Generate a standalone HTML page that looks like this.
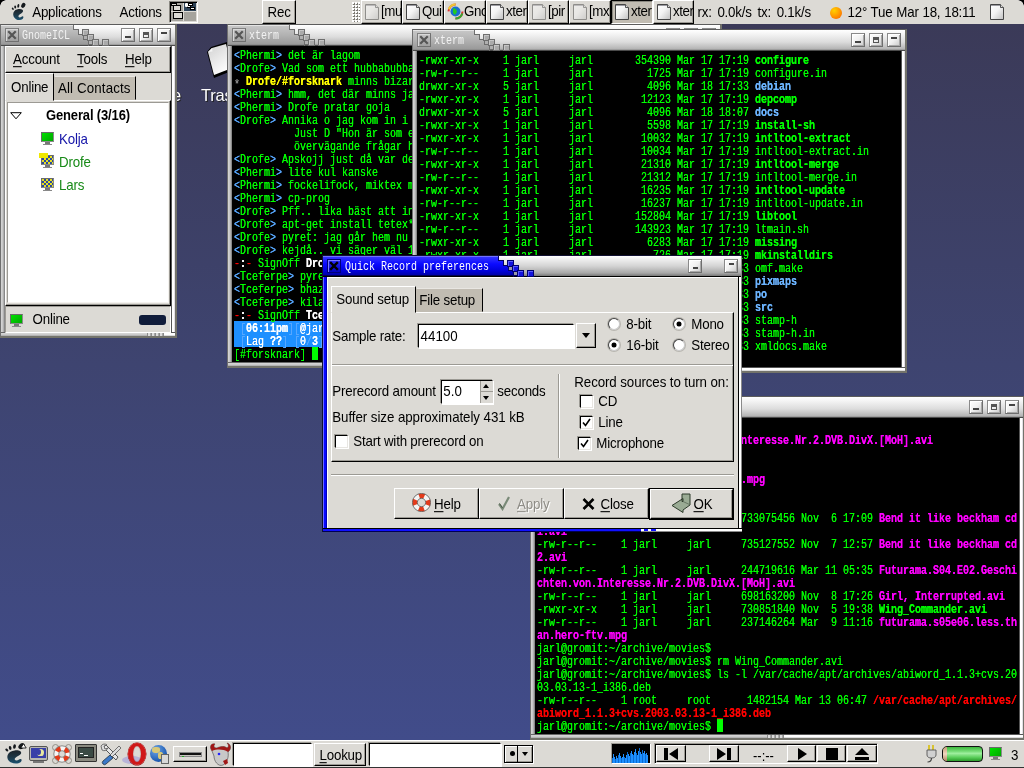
<!DOCTYPE html>
<html><head><meta charset="utf-8"><title>desktop</title>
<style>
*{box-sizing:border-box;margin:0;padding:0}
html,body{width:1024px;height:768px;overflow:hidden;background:#3c3a5c}
body{position:relative;font-family:"Liberation Sans",sans-serif;font-size:13.33px;letter-spacing:-0.2px;color:#000;line-height:1}
.abs{position:absolute}
#root{position:absolute;left:0;top:0;width:1024px;height:768px;overflow:hidden;will-change:transform}
#desk{position:absolute;left:0;top:0;width:1024px;height:768px;background:linear-gradient(#3b3a58 24px,#3e4470 365px,#414c8a 740px)}
.t{position:absolute;white-space:pre;line-height:16px;height:16px;transform:scaleY(1.08);transform-origin:0 12.4px}
/* ---------- window frames ---------- */
.win{position:absolute;background:#72726a}
.win .fr{position:absolute;left:0;top:0;right:0;bottom:0;border:1px solid #5c5c5c;border-left-color:#707070;border-right:2px solid #73736b;border-bottom:2px solid #73736b;background:linear-gradient(90deg,#e6e6e6 0,#bdbdbd 1px,#b5b5b5 3px,#fff 3px) }
.win .fr2{position:absolute;left:1px;top:1px;right:2px;bottom:2px;background:#f4f4f4;border-left:1px solid #e4e4e4}
.win .lf{position:absolute;left:1px;top:1px;width:4px;bottom:2px;background:linear-gradient(90deg,#d2d2d2 0 1px,#c8c8c8 1px 2px,#b0b0b0 2px 3px,#888 3px)}
.win .rf{position:absolute;right:2px;top:1px;width:4px;bottom:2px;background:linear-gradient(90deg,#555 0 1px,#fff 1px 3px,#e4e0e6 3px)}
.win .bf{position:absolute;left:1px;right:2px;bottom:2px;height:4px;background:linear-gradient(#555 0 1px,#fff 1px 3px,#dcdcdc 3px)}
.win .bfl{position:absolute;left:1px;bottom:2px;height:4px;background:linear-gradient(#666 0 1px,#d4d4d4 1px 2px,#cbcbcb 2px 3px,#b4b4b4 3px)}
.win .grip{position:absolute;bottom:2px;height:3px;width:17px;background:repeating-linear-gradient(90deg,#8c8c8c 0 1px,#dcdcdc 1px 3px,#a8a8a8 3px 4px)}
.win .tb{position:absolute;left:1px;top:1px;right:2px;height:21px;background:linear-gradient(#fff 0,#f4f4f4 4px,#dcdcdc 12px,#b4b4b4 19px,#8a8a8a 20px,#4a4a4a 20px)}
.win .tbl{position:absolute;left:0;top:0;height:21px;background:linear-gradient(#e4e4e4 0 1px,#c6c6c6 1px,#b2b2b2 10px,#9a9a9a 19px,#828282 20px,#4a4a4a 20px)}
.win .ttl{position:absolute;left:21px;top:5px;font-family:"Liberation Mono",monospace;font-size:12px;line-height:13px;letter-spacing:0;color:#f2f2f2;white-space:pre;transform:scale(0.83333,1);transform-origin:0 0}
.sq{position:absolute;width:7px;height:7px;background:#aaa;border:1px solid #6e6e6e;box-shadow:inset 1px 1px 0 #c6c6c6}
.hole{position:absolute;width:5px;height:5px;background:#b0b0b0;border:1px solid #6e6e6e}
.win .tbo{position:absolute;left:0;top:0;height:21px;background:#6e6e6e}
.active .tbo{background:#000060}
.cb{position:absolute;left:4px;top:3px;width:14px;height:14px;border:1px solid;border-color:#808080 #707070 #707070 #808080;background:linear-gradient(#c4c4c4,#a0a0a0);box-shadow:inset 1px 1px 0 #d8d8d8}
.wb{position:absolute;top:3px;width:14px;height:14px;border:1px solid;border-color:#8a8a8a #6e6e6e #6e6e6e #8a8a8a;background:linear-gradient(135deg,#fff 0,#f0f0f0 50%,#c8c8c8 100%);box-shadow:inset 1px 1px 0 #fff,inset -1px -1px 0 #a8a8a8}
.wb i{position:absolute;background:#444;display:block}
.active .fr{}
.active .tbl{background:linear-gradient(#7070ff 0 1px,#3434ff 1px,#0a0aff 8px,#0000d8 15px,#0000a8 19px,#000 20px)}
.active .sq{background:#1414e0;border-color:#000070;box-shadow:inset 1px 1px 0 #5a5aff}
.active .hole{background:#9a9aa8;border-color:#000070;box-shadow:none}
.active .cb{border-color:#00007a;background:linear-gradient(#2a2aff,#0000c0);box-shadow:inset 1px 1px 0 #7a7aff}
.active .ttl{color:#fff}
.active .lf{background:linear-gradient(90deg,#8080ff 0 1px,#1010ff 1px 3px,#000068 3px)}
.term{position:absolute;background:#000;overflow:hidden}
.term pre{position:absolute;font-family:"Liberation Mono",monospace;font-size:12px;line-height:13px;letter-spacing:0;color:#00ff00;white-space:pre;transform:scale(0.83333,1);transform-origin:0 0;text-shadow:0 0 0}
.term b{font-weight:bold}
.g{color:#00ff00}.lb{color:#58a8ff}.y{color:#ffff00}.w{color:#fff}.r{color:#ff0000}.m{color:#ff00ff}.db{color:#6cb4ff}.gy{color:#8c8c8c}
/* ---------- gtk widgets ---------- */
.btn{position:absolute;background:#dcdad5;border:1px solid;border-color:#fff #000 #000 #fff;box-shadow:inset -1px -1px 0 #9c9a94}
.entry{position:absolute;background:#fff;border:1px solid;border-color:#000 #fff #fff #000;box-shadow:-1px -1px 0 #9c9a94, 1px 1px 0 #fff}
.chk{position:absolute;width:13px;height:13px;background:#fff;border:1px solid;border-color:#000 #e8e6e2 #e8e6e2 #000;box-shadow:-1px -1px 0 #9c9a94,1px 1px 0 #fff}
.rad{position:absolute;width:12px;height:12px;border-radius:50%;background:#fff;border:1px solid;border-color:#444 #ccc #ccc #444;box-shadow:0 0 0 1px #b8b6b0}
.rad.on::after{content:"";position:absolute;left:3px;top:3px;width:4px;height:4px;border-radius:50%;background:#000;box-shadow:0 0 0 0.5px #000}
u{text-decoration:underline;text-underline-offset:2px;text-decoration-thickness:1px}

.sl{color:#fff}
.cur{background:#00ff00}
.panel{position:absolute;left:0;width:1024px;background:#dcdad5}
.tk{position:absolute;top:0;height:24px;width:42px;border:1px solid;border-color:#fff #000 #000 #fff;box-shadow:inset -1px -1px 0 #9c9a94;background:#dcdad5;overflow:hidden}
.tk.on{background:#c1bcb2;border-color:#000 #fff #fff #000;box-shadow:inset 1px 1px 0 #8a8880}
.tk span{position:absolute;left:19px;top:3px;letter-spacing:-0.45px;white-space:pre;line-height:16px;transform:scaleY(1.08);transform-origin:0 12.4px}
.pg{position:absolute;left:3px;top:3px;width:14px;height:16px}
</style></head>
<body><div id="root"><div id="desk"></div><div class="t" style="left:172px;top:85px;font-size:16.5px;line-height:20px;height:20px;color:#fff;text-shadow:1px 1px 0 #222;transform:none">e</div><div class="t" style="left:201px;top:85px;font-size:16.5px;line-height:20px;height:20px;color:#fff;text-shadow:1px 1px 0 #222;transform:none">Trash</div><svg class="abs" style="left:204px;top:42px" width="30" height="40" viewBox="0 0 30 40"><defs><linearGradient id="trg" x1="0" y1="0" x2="0.6" y2="1"><stop offset="0" stop-color="#d0d0d0"/><stop offset="1" stop-color="#fff"/></linearGradient></defs><path d="M3 10 L7 5 L23 0 L30 28 L10 36 Z" fill="#000"/><path d="M4 10 L8 6 L22 2 L28 26 L10 33 Z" fill="url(#trg)"/><path d="M4 10L8 6L8.500 9.500Z" fill="#f4f4f4"/></svg><div class="win" style="left:0px;top:24px;width:177px;height:314px"><div class="fr"></div><div class="fr2"></div><div class="tb"><div class="tbo" style="width:89px;clip-path:polygon(0 0,73px 0,73px 4px,78px 4px,78px 9px,83px 9px,83px 14px,88px 14px,88px 21px,0 21px)"></div><div class="tbl" style="width:88px;clip-path:polygon(0 0,72px 0,72px 5px,77px 5px,77px 10px,82px 10px,82px 15px,87px 15px,87px 21px,0 21px)"></div><div class="sq" style="left:81px;top:4px"></div><div class="hole" style="left:82px;top:10px"></div><div class="sq" style="left:86px;top:9px"></div><div class="hole" style="left:87px;top:15px"></div><div class="sq" style="left:91px;top:14px"></div><div class="sq" style="left:101px;top:14px"></div><div class="cb"><svg width="12" height="12" viewBox="0 0 12 12" style="position:absolute;left:0;top:0"><path d="M3 3L9 9M9 3L3 9" stroke="#555" stroke-width="2.2" stroke-linecap="square"/></svg></div><div class="ttl" style="left:21px">GnomeICL</div><div class="wb" style="left:156px"><i style="left:3px;top:3px;width:6px;height:2px"></i></div><div class="wb" style="left:138px"><i style="left:3px;top:3px;width:6px;height:6px;background:none;border:1px solid #555;border-top:3px solid #555"></i></div><div class="wb" style="left:120px"><i style="left:3px;top:7px;width:6px;height:2px"></i></div></div><div class="lf" style="top:22px"></div><div class="rf" style="top:22px"></div><div class="bf"></div><div class="bfl" style="width:147px"></div><div class="grip" style="left:147px"></div><div class="abs" style="left:5px;top:22px;width:166px;height:286px;background:#dcdad5"></div><div class="abs" style="left:5px;top:22px;width:166px;height:27px;border:1px solid;border-color:#fff #000 #000 #fff;box-shadow:inset -1px -1px 0 #9c9a94"></div><div class="t" style="left:13px;top:28px;"><u>A</u>ccount</div><div class="t" style="left:77px;top:28px;"><u>T</u>ools</div><div class="t" style="left:125px;top:28px;"><u>H</u>elp</div><div class="abs" style="left:5px;top:76px;width:166px;height:206px;border:1px solid;border-color:#fff #000 #000 #fff;box-shadow:inset -1px -1px 0 #9c9a94"></div><div class="abs" style="left:54px;top:52px;width:82px;height:24px;background:#c1bcb2;border:1px solid;border-color:#e8e6e2 #000 #c1bcb2 #c1bcb2"></div><div class="abs" style="left:5px;top:49px;width:49px;height:28px;background:#dcdad5;border:1px solid;border-color:#fff #000 #dcdad5 #fff"></div><div class="t" style="left:11px;top:56px;">Online</div><div class="t" style="left:58px;top:57px;letter-spacing:0.12px">All Contacts</div><div class="abs" style="left:7px;top:78px;width:162px;height:201px;background:#fff;border:1px solid;border-color:#9c9a94 #f4f2ee #f4f2ee #9c9a94"></div><svg class="abs" style="left:10px;top:88px" width="12" height="8" viewBox="0 0 12 8"><path d="M.7.7h10.600L6 6.800z" fill="#fff" stroke="#000" stroke-width="1"/></svg><div class="t" style="left:46px;top:84px;font-weight:bold;font-size:13px;letter-spacing:-0.15px">General (3/16)</div><div class="abs" style="left:41px;top:108px;width:13px;height:10px;background:linear-gradient(135deg,#00e000,#00a800);border:1px solid #6a6a6a;border-right-color:#8a8a8a;border-bottom-color:#8a8a8a"></div><div class="abs" style="left:45px;top:118px;width:5px;height:2px;background:#777"></div><div class="abs" style="left:43px;top:120px;width:9px;height:1px;background:#888"></div><div class="t" style="left:59px;top:108px;color:#1414a8">Kolja</div><div class="abs" style="left:41px;top:131px;width:13px;height:10px;background:repeating-conic-gradient(#2a4aa0 0 25%,#e8e020 0 50%) 0 0/4px 4px;border:1px solid #6a6a6a;border-right-color:#8a8a8a;border-bottom-color:#8a8a8a"></div><div class="abs" style="left:45px;top:141px;width:5px;height:2px;background:#777"></div><div class="abs" style="left:43px;top:143px;width:9px;height:1px;background:#888"></div><div class="abs" style="left:39px;top:129px;width:9px;height:5px;background:#f0e800"></div><div class="t" style="left:59px;top:131px;color:#178a17">Drofe</div><div class="abs" style="left:41px;top:154px;width:13px;height:10px;background:repeating-conic-gradient(#2a4aa0 0 25%,#e8e020 0 50%) 0 0/4px 4px;border:1px solid #6a6a6a;border-right-color:#8a8a8a;border-bottom-color:#8a8a8a"></div><div class="abs" style="left:45px;top:164px;width:5px;height:2px;background:#777"></div><div class="abs" style="left:43px;top:166px;width:9px;height:1px;background:#888"></div><div class="t" style="left:59px;top:154px;color:#178a17">Lars</div><div class="abs" style="left:5px;top:282px;width:166px;height:27px;border:1px solid;border-color:#9c9a94 #fff #fff #9c9a94"></div><div class="abs" style="left:10px;top:290px;width:13px;height:10px;background:linear-gradient(135deg,#00e000,#00a800);border:1px solid #6a6a6a;border-right-color:#8a8a8a;border-bottom-color:#8a8a8a"></div><div class="abs" style="left:14px;top:300px;width:5px;height:2px;background:#777"></div><div class="abs" style="left:12px;top:302px;width:9px;height:1px;background:#888"></div><div class="t" style="left:32.5px;top:288px;">Online</div><div class="abs" style="left:139px;top:291px;width:27px;height:10px;border-radius:3px;background:#101c3a"></div></div><div class="win" style="left:227px;top:24px;width:495px;height:344px"><div class="fr"></div><div class="fr2"></div><div class="tb"><div class="tbo" style="width:78px;clip-path:polygon(0 0,62px 0,62px 4px,67px 4px,67px 9px,72px 9px,72px 14px,77px 14px,77px 21px,0 21px)"></div><div class="tbl" style="width:77px;clip-path:polygon(0 0,61px 0,61px 5px,66px 5px,66px 10px,71px 10px,71px 15px,76px 15px,76px 21px,0 21px)"></div><div class="sq" style="left:70px;top:4px"></div><div class="hole" style="left:71px;top:10px"></div><div class="sq" style="left:75px;top:9px"></div><div class="hole" style="left:76px;top:15px"></div><div class="sq" style="left:80px;top:14px"></div><div class="sq" style="left:90px;top:14px"></div><div class="cb"><svg width="12" height="12" viewBox="0 0 12 12" style="position:absolute;left:0;top:0"><path d="M3 3L9 9M9 3L3 9" stroke="#555" stroke-width="2.2" stroke-linecap="square"/></svg></div><div class="ttl" style="left:21px">xterm</div><div class="wb" style="left:474px"><i style="left:3px;top:3px;width:6px;height:2px"></i></div><div class="wb" style="left:456px"><i style="left:3px;top:3px;width:6px;height:6px;background:none;border:1px solid #555;border-top:3px solid #555"></i></div><div class="wb" style="left:438px"><i style="left:3px;top:7px;width:6px;height:2px"></i></div></div><div class="lf" style="top:22px"></div><div class="rf" style="top:22px"></div><div class="bf"></div><div class="bfl" style="width:237px"></div><div class="grip" style="left:237px"></div><div class="term" style="left:5px;top:22px;width:484px;height:316px"><div class="abs" style="left:2px;top:275px;width:480px;height:26px;background:#1e90ff"></div><div class="abs" style="left:80px;top:301px;width:6px;height:13px;background:#0f0"></div><pre style="left:2px;top:4px"><span class="lb">&lt;</span>Phermi<span class="lb">&gt;</span> det är lagom
<span class="lb">&lt;</span>Drofe<span class="lb">&gt;</span> Vad som ett hubbabubba ska smaka som en vattenmelon
<span class="gy" style="position:relative;top:3px">*</span> <span class="y"><b>Drofe/#forsknark</b></span> minns bizarra saker från igår
<span class="lb">&lt;</span>Phermi<span class="lb">&gt;</span> hmm, det där minns jag inte
<span class="lb">&lt;</span>Phermi<span class="lb">&gt;</span> Drofe pratar goja
<span class="lb">&lt;</span>Drofe<span class="lb">&gt;</span> Annika o jag kom in i en diskussion om
          Just D "Hon är som en
          övervägande frågar hon
<span class="lb">&lt;</span>Drofe<span class="lb">&gt;</span> Apskojj just då var det
<span class="lb">&lt;</span>Phermi<span class="lb">&gt;</span> lite kul kanske
<span class="lb">&lt;</span>Phermi<span class="lb">&gt;</span> fockelifock, miktex måste
<span class="lb">&lt;</span>Phermi<span class="lb">&gt;</span> cp-prog
<span class="lb">&lt;</span>Drofe<span class="lb">&gt;</span> Pff.. lika bäst att installera
<span class="lb">&lt;</span>Drofe<span class="lb">&gt;</span> apt-get install tetex*
<span class="lb">&lt;</span>Drofe<span class="lb">&gt;</span> pyret: jag går hem nu
<span class="lb">&lt;</span>Drofe<span class="lb">&gt;</span> kejdå.. vi säger väl 10
<span class="r">-</span><span class="w"><b>:</b></span><span class="r">-</span> SignOff <span class="w"><b>Drofe</b></span>: #forsknark
<span class="lb">&lt;</span>Tceferpe<span class="lb">&gt;</span> pyret
<span class="lb">&lt;</span>Tceferpe<span class="lb">&gt;</span> bhaz
<span class="lb">&lt;</span>Tceferpe<span class="lb">&gt;</span> kilar
<span class="r">-</span><span class="w"><b>:</b></span><span class="r">-</span> SignOff <span class="w"><b>Tceferpe</b></span>: #forsknark
<span class="sl"> <span class="lb">[</span><span class="w"><b>06:11pm</b></span><span class="lb">]</span><span class="lb">[</span><span class="w"><b>@</b></span><span class="w">jarl</span><span class="lb">(</span>+i<span class="lb">)]</span>                                                            </span>
<span class="sl"> <span class="lb">[</span><span class="w">Lag </span><span class="w"><b>??</b></span><span class="lb">]</span> <span class="lb">[</span><span class="w">0</span><span class="lb">/</span><span class="w"><b>3</b></span><span class="lb">]</span>                                                              </span>
[#forsknark]</pre></div></div><div class="win" style="left:412px;top:29px;width:495px;height:344px"><div class="fr"></div><div class="fr2"></div><div class="tb"><div class="tbo" style="width:78px;clip-path:polygon(0 0,62px 0,62px 4px,67px 4px,67px 9px,72px 9px,72px 14px,77px 14px,77px 21px,0 21px)"></div><div class="tbl" style="width:77px;clip-path:polygon(0 0,61px 0,61px 5px,66px 5px,66px 10px,71px 10px,71px 15px,76px 15px,76px 21px,0 21px)"></div><div class="sq" style="left:70px;top:4px"></div><div class="hole" style="left:71px;top:10px"></div><div class="sq" style="left:75px;top:9px"></div><div class="hole" style="left:76px;top:15px"></div><div class="sq" style="left:80px;top:14px"></div><div class="sq" style="left:90px;top:14px"></div><div class="cb"><svg width="12" height="12" viewBox="0 0 12 12" style="position:absolute;left:0;top:0"><path d="M3 3L9 9M9 3L3 9" stroke="#555" stroke-width="2.2" stroke-linecap="square"/></svg></div><div class="ttl" style="left:21px">xterm</div><div class="wb" style="left:474px"><i style="left:3px;top:3px;width:6px;height:2px"></i></div><div class="wb" style="left:456px"><i style="left:3px;top:3px;width:6px;height:6px;background:none;border:1px solid #555;border-top:3px solid #555"></i></div><div class="wb" style="left:438px"><i style="left:3px;top:7px;width:6px;height:2px"></i></div></div><div class="lf" style="top:22px"></div><div class="rf" style="top:22px"></div><div class="bf"></div><div class="bfl" style="width:237px"></div><div class="grip" style="left:237px"></div><div class="term" style="left:5px;top:22px;width:484px;height:316px"><pre style="left:2px;top:4px">-rwxr-xr-x    1 jarl     jarl       354390 Mar 17 17:19 <b>configure</b>
-rw-r--r--    1 jarl     jarl         1725 Mar 17 17:19 configure.in
drwxr-xr-x    5 jarl     jarl         4096 Mar 18 17:33 <span class="db"><b>debian</b></span>
-rwxr-xr-x    1 jarl     jarl        12123 Mar 17 17:19 <b>depcomp</b>
drwxr-xr-x    5 jarl     jarl         4096 Mar 18 18:07 <span class="db"><b>docs</b></span>
-rwxr-xr-x    1 jarl     jarl         5598 Mar 17 17:19 <b>install-sh</b>
-rwxr-xr-x    1 jarl     jarl        10032 Mar 17 17:19 <b>intltool-extract</b>
-rw-r--r--    1 jarl     jarl        10034 Mar 17 17:19 intltool-extract.in
-rwxr-xr-x    1 jarl     jarl        21310 Mar 17 17:19 <b>intltool-merge</b>
-rw-r--r--    1 jarl     jarl        21312 Mar 17 17:19 intltool-merge.in
-rwxr-xr-x    1 jarl     jarl        16235 Mar 17 17:19 <b>intltool-update</b>
-rw-r--r--    1 jarl     jarl        16237 Mar 17 17:19 intltool-update.in
-rwxr-xr-x    1 jarl     jarl       152804 Mar 17 17:19 <b>libtool</b>
-rw-r--r--    1 jarl     jarl       143923 Mar 17 17:19 ltmain.sh
-rwxr-xr-x    1 jarl     jarl         6283 Mar 17 17:19 <b>missing</b>
-rwxr-xr-x    1 jarl     jarl          726 Mar 17 17:19 <b>mkinstalldirs</b>
-rw-r--r--    1 jarl     jarl         1113 Mar 18 17:33 omf.make
drwxr-xr-x    3 jarl     jarl         4096 Mar 18 17:33 <span class="db"><b>pixmaps</b></span>
drwxr-xr-x    3 jarl     jarl         4096 Mar 18 17:33 <span class="db"><b>po</b></span>
drwxr-xr-x    3 jarl     jarl         4096 Mar 18 17:33 <span class="db"><b>src</b></span>
-rw-r--r--    1 jarl     jarl           10 Mar 18 17:33 stamp-h
-rw-r--r--    1 jarl     jarl           10 Mar 18 17:33 stamp-h.in
-rw-r--r--    1 jarl     jarl         2443 Mar 18 17:33 xmldocs.make
jarl@gromit:~/src/quickrecord$ </pre></div></div><div class="win" style="left:530px;top:396px;width:495px;height:344px"><div class="fr"></div><div class="fr2"></div><div class="tb"><div class="tbo" style="width:78px;clip-path:polygon(0 0,62px 0,62px 4px,67px 4px,67px 9px,72px 9px,72px 14px,77px 14px,77px 21px,0 21px)"></div><div class="tbl" style="width:77px;clip-path:polygon(0 0,61px 0,61px 5px,66px 5px,66px 10px,71px 10px,71px 15px,76px 15px,76px 21px,0 21px)"></div><div class="sq" style="left:70px;top:4px"></div><div class="hole" style="left:71px;top:10px"></div><div class="sq" style="left:75px;top:9px"></div><div class="hole" style="left:76px;top:15px"></div><div class="sq" style="left:80px;top:14px"></div><div class="sq" style="left:90px;top:14px"></div><div class="cb"><svg width="12" height="12" viewBox="0 0 12 12" style="position:absolute;left:0;top:0"><path d="M3 3L9 9M9 3L3 9" stroke="#555" stroke-width="2.2" stroke-linecap="square"/></svg></div><div class="ttl" style="left:21px">xterm</div><div class="wb" style="left:474px"><i style="left:3px;top:3px;width:6px;height:2px"></i></div><div class="wb" style="left:456px"><i style="left:3px;top:3px;width:6px;height:6px;background:none;border:1px solid #555;border-top:3px solid #555"></i></div><div class="wb" style="left:438px"><i style="left:3px;top:7px;width:6px;height:2px"></i></div></div><div class="lf" style="top:22px"></div><div class="rf" style="top:22px"></div><div class="bf"></div><div class="bfl" style="width:237px"></div><div class="grip" style="left:237px"></div><div class="term" style="left:5px;top:22px;width:484px;height:316px"><div class="abs" style="left:182px;top:301px;width:6px;height:13px;background:#0f0"></div><pre style="left:2px;top:4px">jarl@gromit:~/archive/movies$
<span class="m"><b>Futurama.S04.E02.Geschichten.von.Interesse.Nr.2.DVB.DivX.[MoH].avi</b></span>
jarl@gromit:~/archive/movies$
jarl@gromit:~/archive/movies$
<span class="m"><b>futurama.s05e06.less.than.hero-ftv.mpg</b></span>
jarl@gromit:~/archive/movies$ ls
total 4248132
-rw-r--r--    1 jarl     jarl     733075456 Nov  6 17:09 <span class="m"><b>Bend it like beckham cd</b></span>
<span class="m"><b>1.avi</b></span>
-rw-r--r--    1 jarl     jarl     735127552 Nov  7 12:57 <span class="m"><b>Bend it like beckham cd</b></span>
<span class="m"><b>2.avi</b></span>
-rw-r--r--    1 jarl     jarl     244719616 Mar 11 05:35 <span class="m"><b>Futurama.S04.E02.Geschi</b></span>
<span class="m"><b>chten.von.Interesse.Nr.2.DVB.DivX.[MoH].avi</b></span>
-rw-r--r--    1 jarl     jarl     698163200 Nov  8 17:26 <span class="m"><b>Girl, Interrupted.avi</b></span>
-rwxr-xr-x    1 jarl     jarl     730851840 Nov  5 19:38 <span class="g"><b>Wing_Commander.avi</b></span>
-rw-r--r--    1 jarl     jarl     237146264 Mar  9 11:16 <span class="m"><b>futurama.s05e06.less.th</b></span>
<span class="m"><b>an.hero-ftv.mpg</b></span>
jarl@gromit:~/archive/movies$
jarl@gromit:~/archive/movies$ rm Wing_Commander.avi
jarl@gromit:~/archive/movies$ ls -l /var/cache/apt/archives/abiword_1.1.3+cvs.20
03.03.13-1_i386.deb
-rw-r--r--    1 root     root      1482154 Mar 13 06:47 <span class="r"><b>/var/cache/apt/archives/</b></span>
<span class="r"><b>abiword_1.1.3+cvs.2003.03.13-1_i386.deb</b></span>
jarl@gromit:~/archive/movies$</pre></div></div><div class="win active" style="left:322px;top:255px;width:420px;height:277px;background:none"><div class="abs" style="left:0;top:0;width:420px;height:277px;background:#8a8a8a;border-left:1px solid #101030;border-top:1px solid #101030"></div><div class="abs" style="left:1px;top:1px;width:4px;height:275px;background:linear-gradient(90deg,#6a6aff 0 1px,#0808ff 1px 3px,#0000b8 3px)"></div><div class="abs" style="left:416px;top:22px;width:4px;height:255px;background:linear-gradient(90deg,#000 0 1px,#fff 1px 3px,#8a8a8a 3px)"></div><div class="abs" style="left:1px;top:273px;width:419px;height:4px;background:linear-gradient(#000 0 1px,#fff 1px 3px,#8a8a8a 3px)"></div><div class="abs" style="left:1px;top:273px;width:318px;height:4px;background:linear-gradient(#000 0 1px,#1010ff 1px 3px,#000050 3px)"></div><div class="abs" style="left:322px;top:274px;width:4px;height:2px;background:#1010ff"></div><div class="abs" style="left:329px;top:274px;width:5px;height:2px;background:#1010ff"></div><div class="tb" style="left:1px;top:1px;right:1px;height:21px;background:linear-gradient(#fff 0,#f0f0f0 3px,#d4d4d4 10px,#a8a8a8 17px,#787878 20px,#000 20px)"><div class="tbo" style="width:192px;clip-path:polygon(0 0,176px 0,176px 4px,181px 4px,181px 9px,186px 9px,186px 14px,191px 14px,191px 21px,0 21px)"></div><div class="tbl" style="width:191px;clip-path:polygon(0 0,175px 0,175px 5px,180px 5px,180px 10px,185px 10px,185px 15px,190px 15px,190px 21px,0 21px)"></div><div class="sq" style="left:184px;top:4px"></div><div class="hole" style="left:185px;top:10px"></div><div class="sq" style="left:189px;top:9px"></div><div class="hole" style="left:190px;top:15px"></div><div class="sq" style="left:194px;top:14px"></div><div class="sq" style="left:204px;top:14px"></div><div class="cb"><svg width="12" height="12" viewBox="0 0 12 12" style="position:absolute;left:0;top:0"><path d="M3 3L9 9M9 3L3 9" stroke="#000" stroke-width="2.4" stroke-linecap="square"/></svg></div><div class="ttl" style="left:22px">Quick Record preferences</div><div class="wb" style="left:365px"><i style="left:4px;top:7px;width:5px;height:2px"></i></div><div class="wb" style="left:401px"><i style="left:4px;top:3px;width:5px;height:2px"></i></div></div><div class="abs" style="left:5px;top:22px;width:411px;height:251px;background:#dcdad5;border-left:1px solid #fff;border-top:1px solid #fff"></div><div class="abs" style="left:9px;top:57px;width:403px;height:150px;border:1px solid;border-color:#fff #000 #000 #fff;box-shadow:inset -1px -1px 0 #9c9a94"></div><div class="abs" style="left:94px;top:33px;width:67px;height:24px;background:#c1bcb2;border:1px solid;border-color:#e8e6e2 #000 #c1bcb2 #c1bcb2"></div><div class="abs" style="left:9px;top:31px;width:85px;height:27px;background:#dcdad5;border:1px solid;border-color:#fff #000 #dcdad5 #fff"></div><div class="t" style="left:14.300000000000011px;top:37px;">Sound setup</div><div class="t" style="left:97.30000000000001px;top:38px;">File setup</div><div class="t" style="left:10.300000000000011px;top:74px;">Sample rate:</div><div class="entry" style="left:96px;top:69px;width:156px;height:24px"></div><div class="t" style="left:98.60000000000002px;top:74px;letter-spacing:0">44100</div><div class="btn" style="left:254px;top:68px;width:20px;height:25px"><div class="abs" style="left:5px;top:9px;width:0;height:0;border:4.5px solid transparent;border-top:5px solid #000;border-bottom:0"></div></div><div class="rad" style="left:286px;top:63px"></div><div class="t" style="left:304.29999999999995px;top:62px;">8-bit</div><div class="rad on" style="left:286px;top:84px"></div><div class="t" style="left:304.29999999999995px;top:83px;">16-bit</div><div class="rad on" style="left:351px;top:63px"></div><div class="t" style="left:369.29999999999995px;top:62px;">Mono</div><div class="rad" style="left:351px;top:84px"></div><div class="t" style="left:369.29999999999995px;top:83px;">Stereo</div><div class="abs" style="left:10px;top:109px;width:401px;height:2px;background:linear-gradient(#9c9a94 0 1px,#fff 1px)"></div><div class="abs" style="left:9px;top:219px;width:403px;height:2px;background:linear-gradient(#9c9a94 0 1px,#fff 1px)"></div><div class="abs" style="left:236px;top:119px;width:2px;height:84px;background:linear-gradient(90deg,#9c9a94 0 1px,#fff 1px)"></div><div class="t" style="left:10.300000000000011px;top:129px;">Prerecord amount</div><div class="entry" style="left:119px;top:125px;width:52px;height:24px"></div><div class="t" style="left:121.30000000000001px;top:129px;letter-spacing:0">5.0</div><div class="abs" style="left:158px;top:126px;width:13px;height:22px;background:#dcdad5;border-left:1px solid #9c9a94"></div><div class="abs" style="left:158px;top:136px;width:13px;height:1px;background:#9c9a94"></div><div class="abs" style="left:161px;top:129px;width:0;height:0;border:3.5px solid transparent;border-bottom:4px solid #000;border-top:0"></div><div class="abs" style="left:161px;top:141px;width:0;height:0;border:3.5px solid transparent;border-top:4px solid #000;border-bottom:0"></div><div class="t" style="left:175.3px;top:129px;">seconds</div><div class="t" style="left:10.300000000000011px;top:155px;letter-spacing:-0.07px">Buffer size approximately 431 kB</div><div class="chk" style="left:13px;top:180px"></div><div class="t" style="left:31.30000000000001px;top:179px;">Start with prerecord on</div><div class="t" style="left:252.29999999999995px;top:120px;letter-spacing:-0.1px">Record sources to turn on:</div><div class="chk" style="left:258px;top:140px"></div><div class="t" style="left:276.29999999999995px;top:139px;">CD</div><div class="chk" style="left:258px;top:161px"><svg width="11" height="11" viewBox="0 0 11 11" style="position:absolute;left:0;top:0"><path d="M2 5.500L4.500 8.500L9 2" fill="none" stroke="#000" stroke-width="1.600"/></svg></div><div class="t" style="left:276.29999999999995px;top:160px;">Line</div><div class="chk" style="left:256px;top:182px"><svg width="11" height="11" viewBox="0 0 11 11" style="position:absolute;left:0;top:0"><path d="M2 5.500L4.500 8.500L9 2" fill="none" stroke="#000" stroke-width="1.600"/></svg></div><div class="t" style="left:274.29999999999995px;top:181px;">Microphone</div><div class="btn" style="left:72px;top:233px;width:85px;height:31px"></div><div class="btn" style="left:157px;top:233px;width:85px;height:31px"></div><div class="btn" style="left:242px;top:233px;width:85px;height:31px"></div><div class="abs" style="left:327px;top:233px;width:85px;height:32px;border:1px solid #000"><div class="btn" style="left:0;top:0;width:83px;height:30px"></div></div><svg class="abs" style="left:90px;top:238px" width="19" height="19" viewBox="0 0 20 20"><circle cx="10" cy="10" r="7" fill="none" stroke="#f4f4f4" stroke-width="5"/><circle cx="10" cy="10" r="7" fill="none" stroke="#e43a1a" stroke-width="5" stroke-dasharray="5.5 5.5" stroke-dashoffset="2.7"/><circle cx="10" cy="10" r="9.6" fill="none" stroke="#555" stroke-width="0.8"/><circle cx="10" cy="10" r="4.400" fill="none" stroke="#555" stroke-width="0.8"/></svg><div class="t" style="left:112px;top:242px;"><u>H</u>elp</div><svg class="abs" style="left:175px;top:240px" width="15" height="16" viewBox="0 0 15 16"><path d="M2 9l3.500 5L12 2" fill="none" stroke="#7a8a78" stroke-width="2.200"/><path d="M2.500 8.500l3 4.500" stroke="#4a5a48" stroke-width="1"/></svg><div class="t" style="left:195px;top:242px;color:#8e8c86;text-shadow:1px 1px 0 #fff"><u>A</u>pply</div><svg class="abs" style="left:260px;top:243px" width="13" height="12" viewBox="0 0 13 12"><path d="M1.500 1L11.500 11M11.500 1L1.500 11" stroke="#000" stroke-width="2.600"/></svg><div class="t" style="left:278.5px;top:242px;"><u>C</u>lose</div><svg class="abs" style="left:349px;top:238px" width="20" height="20" viewBox="0 0 20 20"><path d="M11 1H19V12L12 17V19.500L1 12.500L12 5.500V8.500H11Z" fill="#9aab94" stroke="#2c3a2a" stroke-width="1" stroke-linejoin="round"/><path d="M12 8.500L18.500 11.500" stroke="#5a6a58" stroke-width="0.8"/></svg><div class="t" style="left:371.5px;top:242px;"><u>O</u>K</div></div><div class="panel" style="top:0;height:24px;border-radius:6px 6px 0 0;background:#dcdad5"></div><div class="abs" style="left:0;top:0;width:6px;height:6px;background:radial-gradient(circle at 6px 6px,transparent 5.5px,#000 6px)"></div><div class="abs" style="left:1018px;top:0;width:6px;height:6px;background:radial-gradient(circle at 0 6px,transparent 5.5px,#000 6px)"></div><svg class="abs" style="left:0;top:0" width="32" height="24" viewBox="0 0 32 24"><defs><linearGradient id="ftga" x1="0" y1="0" x2="0" y2="1"><stop offset="0" stop-color="#1c2228"/><stop offset="0.5" stop-color="#1e3644"/><stop offset="1" stop-color="#1a5272"/></linearGradient></defs><g fill="url(#ftga)"><ellipse cx="23.3" cy="5.4" rx="1.9" ry="2.7" transform="rotate(35 23.3 5.4)" fill="#14181c"/><ellipse cx="18.3" cy="5.8" rx="1.0" ry="1.9" transform="rotate(8 18.3 5.8)" fill="#14181c"/><ellipse cx="15.2" cy="7" rx="0.95" ry="1.6" transform="rotate(-8 15.2 7)" fill="#14181c"/><ellipse cx="12.8" cy="8.7" rx="0.85" ry="1.3" transform="rotate(-35 12.8 8.7)" fill="#14181c"/><path d="M18.5 9C21.5 8.600 23.600 9.800 23 11.600C22.500 13.200 20 14 18.800 15.300C18 16.200 18.600 17.500 19.800 17.500C21 17.500 21.500 16.400 22.600 16.300C23.800 16.300 23.600 18 22.600 19C21 20.400 18 20.400 16 19.200C13.600 17.800 12.600 15 13.500 12.600C14.300 10.500 16.200 9.300 18.500 9Z"/></g></svg><div class="t" style="left:32.2px;top:5px;">Applications</div><div class="t" style="left:119.5px;top:5px;">Actions</div><div class="abs" style="left:169px;top:1px;width:29px;height:22px;border:1px solid;border-color:#8a8882 #fff #fff #8a8882;background:#dcdad5"><div class="abs" style="left:0;top:0;width:27px;height:20px;border-left:1px solid #000;border-top:1px solid #000"></div><div class="abs" style="left:1px;top:1px;width:12px;height:8px;background:#a5a39d"></div><div class="abs" style="left:1px;top:1px;width:6px;height:3px;background:#dcdad5;border:1px solid #000"></div><div class="abs" style="left:3px;top:3px;width:8px;height:6px;background:#dcdad5;border:1px solid #000"></div><div class="abs" style="left:14px;top:1px;width:12px;height:8px;background:#2f4458"></div><div class="abs" style="left:18px;top:1px;width:5px;height:3px;background:#fff;border:1px solid #000"></div><div class="abs" style="left:17px;top:3px;width:4px;height:3px;background:#fff;border:1px solid #000"></div><div class="abs" style="left:20px;top:5px;width:5px;height:3px;background:#fff;border:1px solid #000"></div><div class="abs" style="left:15px;top:1px;width:3px;height:4px;background:#fff;border-radius:1px"></div><div class="abs" style="left:1px;top:10px;width:12px;height:9px;background:#a5a39d"></div><div class="abs" style="left:3px;top:10px;width:10px;height:7px;background:#dcdad5;border:1px solid #000"></div><div class="abs" style="left:14px;top:10px;width:12px;height:9px;background:#a5a39d"></div></div><div class="btn" style="left:262px;top:0;width:34px;height:24px"></div><div class="t" style="left:267.5px;top:5px;">Rec</div><div class="abs" style="left:352px;top:2px;width:8px;height:20px;background-image:radial-gradient(circle at 1px 1px,#fff 0.8px,transparent 1px),radial-gradient(circle at 2px 2px,#7a7872 0.8px,transparent 1px);background-size:3px 3px"></div><div class="tk" style="left:361px;width:41px"><svg class="pg" viewBox="0 0 14 16" style="opacity:0.5"><defs><linearGradient id="pgg" x1="0" y1="0" x2="1" y2="1"><stop offset="0" stop-color="#fff"/><stop offset="0.45" stop-color="#f4f4f4"/><stop offset="1" stop-color="#c0c0c0"/></linearGradient></defs><path d="M0.5 0.5H10.5L13.500 3.500V15.500H0.5Z" fill="url(#pgg)" stroke="#444" stroke-width="1"/><path d="M1 1.500H10" stroke="#9a9aa0" stroke-width="1"/><path d="M10.500 0.5V3.500H13.500" fill="#ddd" stroke="#444" stroke-width="0.9"/></svg><span>[mu</span></div><div class="tk" style="left:402px;width:42px"><svg class="pg" viewBox="0 0 14 16" style="opacity:1"><defs><linearGradient id="pgg" x1="0" y1="0" x2="1" y2="1"><stop offset="0" stop-color="#fff"/><stop offset="0.45" stop-color="#f4f4f4"/><stop offset="1" stop-color="#c0c0c0"/></linearGradient></defs><path d="M0.5 0.5H10.5L13.500 3.500V15.500H0.5Z" fill="url(#pgg)" stroke="#444" stroke-width="1"/><path d="M1 1.500H10" stroke="#9a9aa0" stroke-width="1"/><path d="M10.500 0.5V3.500H13.500" fill="#ddd" stroke="#444" stroke-width="0.9"/></svg><span>Qui</span></div><div class="tk" style="left:444px;width:42px"><svg class="pg" style="width:17px;height:17px;left:2px;top:2px" viewBox="0 0 17 17"><circle cx="8.5" cy="8.500" r="7" fill="none" stroke="#d33" stroke-width="2" stroke-dasharray="11 11" /><circle cx="8.5" cy="8.500" r="7" fill="none" stroke="#3a3" stroke-width="2" stroke-dasharray="9 35" stroke-dashoffset="-2"/><circle cx="8.5" cy="8.500" r="7" fill="none" stroke="#ec3" stroke-width="2" stroke-dasharray="9 35" stroke-dashoffset="-24"/><circle cx="8.5" cy="8.500" r="5" fill="#1a6fd0"/><path d="M6 5l3 1 1 3-2 3-2-2z" fill="#2c2"/></svg><span>Gno</span></div><div class="tk" style="left:486px;width:42px"><svg class="pg" viewBox="0 0 14 16" style="opacity:1"><defs><linearGradient id="pgg" x1="0" y1="0" x2="1" y2="1"><stop offset="0" stop-color="#fff"/><stop offset="0.45" stop-color="#f4f4f4"/><stop offset="1" stop-color="#c0c0c0"/></linearGradient></defs><path d="M0.5 0.5H10.5L13.500 3.500V15.500H0.5Z" fill="url(#pgg)" stroke="#444" stroke-width="1"/><path d="M1 1.500H10" stroke="#9a9aa0" stroke-width="1"/><path d="M10.500 0.5V3.500H13.500" fill="#ddd" stroke="#444" stroke-width="0.9"/></svg><span>xter</span></div><div class="tk" style="left:528px;width:41px"><svg class="pg" viewBox="0 0 14 16" style="opacity:0.5"><defs><linearGradient id="pgg" x1="0" y1="0" x2="1" y2="1"><stop offset="0" stop-color="#fff"/><stop offset="0.45" stop-color="#f4f4f4"/><stop offset="1" stop-color="#c0c0c0"/></linearGradient></defs><path d="M0.5 0.5H10.5L13.500 3.500V15.500H0.5Z" fill="url(#pgg)" stroke="#444" stroke-width="1"/><path d="M1 1.500H10" stroke="#9a9aa0" stroke-width="1"/><path d="M10.500 0.5V3.500H13.500" fill="#ddd" stroke="#444" stroke-width="0.9"/></svg><span>[pir</span></div><div class="tk" style="left:569px;width:42px"><svg class="pg" viewBox="0 0 14 16" style="opacity:0.5"><defs><linearGradient id="pgg" x1="0" y1="0" x2="1" y2="1"><stop offset="0" stop-color="#fff"/><stop offset="0.45" stop-color="#f4f4f4"/><stop offset="1" stop-color="#c0c0c0"/></linearGradient></defs><path d="M0.5 0.5H10.5L13.500 3.500V15.500H0.5Z" fill="url(#pgg)" stroke="#444" stroke-width="1"/><path d="M1 1.500H10" stroke="#9a9aa0" stroke-width="1"/><path d="M10.500 0.5V3.500H13.500" fill="#ddd" stroke="#444" stroke-width="0.9"/></svg><span>[mx</span></div><div class="tk on" style="left:611px;width:42px"><svg class="pg" viewBox="0 0 14 16" style="opacity:1"><defs><linearGradient id="pgg" x1="0" y1="0" x2="1" y2="1"><stop offset="0" stop-color="#fff"/><stop offset="0.45" stop-color="#f4f4f4"/><stop offset="1" stop-color="#c0c0c0"/></linearGradient></defs><path d="M0.5 0.5H10.5L13.500 3.500V15.500H0.5Z" fill="url(#pgg)" stroke="#444" stroke-width="1"/><path d="M1 1.500H10" stroke="#9a9aa0" stroke-width="1"/><path d="M10.500 0.5V3.500H13.500" fill="#ddd" stroke="#444" stroke-width="0.9"/></svg><span>xter</span></div><div class="tk" style="left:653px;width:41px"><svg class="pg" viewBox="0 0 14 16" style="opacity:1"><defs><linearGradient id="pgg" x1="0" y1="0" x2="1" y2="1"><stop offset="0" stop-color="#fff"/><stop offset="0.45" stop-color="#f4f4f4"/><stop offset="1" stop-color="#c0c0c0"/></linearGradient></defs><path d="M0.5 0.5H10.5L13.500 3.500V15.500H0.5Z" fill="url(#pgg)" stroke="#444" stroke-width="1"/><path d="M1 1.500H10" stroke="#9a9aa0" stroke-width="1"/><path d="M10.500 0.5V3.500H13.500" fill="#ddd" stroke="#444" stroke-width="0.9"/></svg><span>xter</span></div><div class="t" style="left:697.5px;top:5px;word-spacing:2.2px">rx: 0.0k/s tx: 0.1k/s</div><div class="abs" style="left:830px;top:7px;width:12px;height:12px;border-radius:50%;background:radial-gradient(circle at 35% 30%,#ffd000,#ff8c00 60%,#f06000);"></div><div class="t" style="left:847.5px;top:5px;word-spacing:0.3px">12° Tue Mar 18, 18:11</div><div class="abs" style="left:986px;top:2px;width:20px;height:20px"><svg class="pg" style="left:4px;top:2px;width:14px;height:16px" viewBox="0 0 14 16" style="opacity:1"><defs><linearGradient id="pgg" x1="0" y1="0" x2="1" y2="1"><stop offset="0" stop-color="#fff"/><stop offset="0.45" stop-color="#f4f4f4"/><stop offset="1" stop-color="#c0c0c0"/></linearGradient></defs><path d="M0.5 0.5H10.5L13.500 3.500V15.500H0.5Z" fill="url(#pgg)" stroke="#444" stroke-width="1"/><path d="M1 1.500H10" stroke="#9a9aa0" stroke-width="1"/><path d="M10.500 0.5V3.500H13.500" fill="#ddd" stroke="#444" stroke-width="0.9"/></svg></div><div class="panel" style="top:740px;height:28px;border-top:1px solid #fff;border-bottom:1px solid #333"></div><svg class="abs" style="left:5px;top:743px" width="20" height="21" viewBox="11.5 2.800 14.300 17.600" preserveAspectRatio="none"><defs><linearGradient id="ftgb" x1="0" y1="0" x2="0" y2="1"><stop offset="0" stop-color="#1c2228"/><stop offset="0.5" stop-color="#1e3644"/><stop offset="1" stop-color="#1a5272"/></linearGradient></defs><g fill="url(#ftgb)"><ellipse cx="23.3" cy="5.4" rx="1.9" ry="2.7" transform="rotate(35 23.3 5.4)" fill="#14181c"/><ellipse cx="18.3" cy="5.8" rx="1.0" ry="1.9" transform="rotate(8 18.3 5.8)" fill="#14181c"/><ellipse cx="15.2" cy="7" rx="0.95" ry="1.6" transform="rotate(-8 15.2 7)" fill="#14181c"/><ellipse cx="12.8" cy="8.7" rx="0.85" ry="1.3" transform="rotate(-35 12.8 8.7)" fill="#14181c"/><path d="M18.5 9C21.5 8.600 23.600 9.800 23 11.600C22.500 13.200 20 14 18.800 15.300C18 16.200 18.600 17.500 19.800 17.500C21 17.500 21.500 16.400 22.600 16.300C23.800 16.300 23.600 18 22.600 19C21 20.400 18 20.400 16 19.200C13.600 17.800 12.600 15 13.500 12.600C14.300 10.500 16.200 9.300 18.500 9Z"/></g></svg><svg class="abs" style="left:20px;top:743px" width="7" height="6" viewBox="0 0 7 6"><path d="M3.500 0.800L6.200 5H0.800Z" fill="#fff" stroke="#000" stroke-width="0.8"/></svg><div class="abs" style="left:29px;top:746px;width:19px;height:15px;background:#b8b8b0;border:1px solid #555;border-radius:2px"><div class="abs" style="left:1px;top:1px;width:15px;height:10px;background:#3840a8"></div><div class="abs" style="left:7px;top:2px;width:7px;height:7px;border-radius:50%;background:#e8e8a0;box-shadow:inset 2px -1px 0 0 #e8e8a0"></div><div class="abs" style="left:6px;top:2px;width:5px;height:6px;border-radius:50%;background:#3840a8"></div></div><div class="abs" style="left:33px;top:761px;width:11px;height:2px;background:#777"></div><svg class="abs" style="left:51px;top:743px" width="22" height="22" viewBox="0 0 22 22"><g fill="none" stroke="#8a8880" stroke-width="0.9"><circle cx="4.500" cy="4.500" r="3"/><circle cx="17.500" cy="4.500" r="3"/><circle cx="4.500" cy="17.500" r="3"/><circle cx="17.500" cy="17.500" r="3"/></g><circle cx="11" cy="11" r="5.700" fill="none" stroke="#f6f6f6" stroke-width="4.600"/><circle cx="11" cy="11" r="5.700" fill="none" stroke="#e43a1a" stroke-width="4.600" stroke-dasharray="4.480 4.480" stroke-dashoffset="-2.240"/><circle cx="11" cy="11" r="8.200" fill="none" stroke="#666" stroke-width="0.7"/><circle cx="11" cy="11" r="3.300" fill="none" stroke="#666" stroke-width="0.7"/></svg><div class="abs" style="left:75px;top:744px;width:22px;height:18px;background:#8a8a80;border:1px solid #333;border-radius:1px"><div class="abs" style="left:2px;top:2px;width:16px;height:11px;background:#3a4a44;border:1px solid #222"></div><div class="abs" style="left:4px;top:8px;width:3px;height:1px;background:#fff"></div><div class="abs" style="left:8px;top:10px;width:4px;height:1px;background:#fff"></div></div><svg class="abs" style="left:100px;top:743px" width="23" height="23" viewBox="0 0 23 23"><path d="M3 4l3-2 12 12-2 3z" fill="#e8e8e8" stroke="#555" stroke-width="1"/><path d="M1 3a4 4 0 0 1 6-1l-3 1 1 3 3-1a4 4 0 0 1-6 2z" fill="#ddd" stroke="#555" stroke-width=".8"/><path d="M19 3l2 2-9 9-2-2z" fill="#ddd" stroke="#555" stroke-width=".8"/><path d="M10 12l3 3-7 6a2 2 0 0 1-3-3z" fill="#3a78c8" stroke="#234" stroke-width=".8"/></svg><div class="abs" style="left:122px;top:756px;width:20px;height:8px;border-radius:50%;background:#b8b4d8"></div><div class="abs" style="left:128px;top:743px;width:18px;height:22px;border-radius:50%;border:5px solid #d01818;border-top-width:3px;border-bottom-width:3px;box-shadow:inset 0 0 1px #700,0 0 0 0.5px #900"></div><div class="abs" style="left:150px;top:745px;width:17px;height:17px;border-radius:50%;background:radial-gradient(circle at 35% 30%,#6fa8e8,#1c58b0 70%,#0c3070);overflow:hidden"><div class="abs" style="left:2px;top:2px;width:8px;height:6px;background:#d8c878;border-radius:40%"></div><div class="abs" style="left:8px;top:7px;width:5px;height:7px;background:#d8c878;border-radius:40%"></div></div><div class="abs" style="left:161px;top:754px;width:8px;height:10px;background:#d8d8d8;border:1px solid #666"></div><div class="btn" style="left:173px;top:746px;width:34px;height:16px"><div class="abs" style="left:5px;top:5px;width:23px;height:5px;background:#c8c6c0;border:1px solid #888"></div><div class="abs" style="left:6px;top:6px;width:21px;height:2px;background:#111"></div><div class="abs" style="left:8px;top:9px;width:2px;height:1px;background:#2a2"></div></div><svg class="abs" style="left:209px;top:741px" width="23" height="26" viewBox="0 0 23 26"><path d="M3 10C0 6 2 2 6 3 4 5 5 7 8 7 12 5 16 5 18 7 20 6 20 4 18 2 22 3 23 8 19 11 20 16 18 22 14 24 9 26 5 20 5 15Z" fill="#c8c8c8" stroke="#666" stroke-width=".8"/><path d="M3 10C0 6 2 2 6 3 4 5 5 7 8 7 12 5 16 5 18 7 20 6 20 4 18 2 22 3 23 8 19 11 14 8 8 8 3 10Z" fill="#a01818"/><path d="M14 20l4-2 1 4-3 2z" fill="#a01818"/><circle cx="10" cy="13" r="1.300" fill="#22f"/></svg><div class="entry" style="left:233px;top:743px;width:79px;height:23px"></div><div class="btn" style="left:314px;top:743px;width:52px;height:23px"></div><div class="t" style="left:319.5px;top:748px;"><u>L</u>ookup</div><div class="entry" style="left:369px;top:743px;width:132px;height:23px"></div><div class="btn" style="left:504px;top:745px;width:29px;height:18px;border-color:#000;box-shadow:inset 1px 1px 0 #fff,inset -1px -1px 0 #9c9a94,1px 1px 0 #fff"><div class="abs" style="left:12px;top:0;width:1px;height:16px;background:#000"></div><div class="abs" style="left:5px;top:5px;width:5px;height:5px;border-radius:50%;background:#000"></div><div class="abs" style="left:17px;top:6px;width:0;height:0;border:3.5px solid transparent;border-top:4px solid #000;border-bottom:0"></div></div><div class="abs" style="left:611px;top:743px;width:40px;height:21px;border:1px solid;border-color:#9c9a94 #fff #fff #9c9a94;background:#000"><svg width="38" height="19" style="position:absolute;left:0;top:0"><rect x="0" y="14" width="1" height="5" fill="#0a6ad0"/><rect x="1" y="10" width="1" height="9" fill="#1e90ff"/><rect x="2" y="13" width="1" height="6" fill="#1e90ff"/><rect x="3" y="15" width="1" height="4" fill="#0a6ad0"/><rect x="4" y="12" width="1" height="7" fill="#1e90ff"/><rect x="5" y="14" width="1" height="5" fill="#1e90ff"/><rect x="6" y="11" width="1" height="8" fill="#0a6ad0"/><rect x="7" y="9" width="1" height="10" fill="#1e90ff"/><rect x="8" y="12" width="1" height="7" fill="#1e90ff"/><rect x="9" y="14" width="1" height="5" fill="#0a6ad0"/><rect x="10" y="13" width="1" height="6" fill="#1e90ff"/><rect x="11" y="10" width="1" height="9" fill="#1e90ff"/><rect x="12" y="13" width="1" height="6" fill="#0a6ad0"/><rect x="13" y="14" width="1" height="5" fill="#1e90ff"/><rect x="14" y="11" width="1" height="8" fill="#1e90ff"/><rect x="15" y="8" width="1" height="11" fill="#0a6ad0"/><rect x="16" y="10" width="1" height="9" fill="#1e90ff"/><rect x="17" y="12" width="1" height="7" fill="#1e90ff"/><rect x="18" y="9" width="1" height="10" fill="#0a6ad0"/><rect x="19" y="7" width="1" height="12" fill="#1e90ff"/><rect x="20" y="10" width="1" height="9" fill="#1e90ff"/><rect x="21" y="11" width="1" height="8" fill="#0a6ad0"/><rect x="22" y="8" width="1" height="11" fill="#1e90ff"/><rect x="23" y="5" width="1" height="14" fill="#1e90ff"/><rect x="24" y="9" width="1" height="10" fill="#0a6ad0"/><rect x="25" y="11" width="1" height="8" fill="#1e90ff"/><rect x="26" y="7" width="1" height="12" fill="#1e90ff"/><rect x="27" y="4" width="1" height="15" fill="#0a6ad0"/><rect x="28" y="8" width="1" height="11" fill="#1e90ff"/><rect x="29" y="10" width="1" height="9" fill="#1e90ff"/><rect x="30" y="6" width="1" height="13" fill="#0a6ad0"/><rect x="31" y="9" width="1" height="10" fill="#1e90ff"/><rect x="32" y="7" width="1" height="12" fill="#1e90ff"/><rect x="33" y="10" width="1" height="9" fill="#0a6ad0"/><rect x="34" y="9" width="1" height="10" fill="#1e90ff"/><rect x="35" y="11" width="1" height="8" fill="#1e90ff"/></svg></div><div class="abs" style="left:654px;top:743px;width:224px;height:21px;border:1px solid;border-color:#9c9a94 #fff #fff #9c9a94;box-shadow:inset 1px 1px 0 #000"></div><div class="btn" style="left:656px;top:745px;width:30px;height:17px"><svg class="abs" style="left:0;top:0" width="30" height="16" viewBox="0 0 30 16"><path d="M7 2h4v12h-4zM21 2v12l-9-6z" fill="#000"/></svg></div><div class="btn" style="left:709px;top:745px;width:30px;height:17px"><svg class="abs" style="left:0;top:0" width="30" height="16" viewBox="0 0 30 16"><path d="M7 2l9 6-9 6zM17 2h4v12h-4z" fill="#000"/></svg></div><div class="t" style="left:753px;top:749px;font-size:13px;letter-spacing:0">--:--</div><div class="btn" style="left:787px;top:745px;width:29px;height:17px"><svg class="abs" style="left:0;top:0" width="30" height="16" viewBox="0 0 30 16"><path d="M10 2l9 6-9 6z" fill="#000"/></svg></div><div class="btn" style="left:817px;top:745px;width:29px;height:17px"><svg class="abs" style="left:0;top:0" width="30" height="16" viewBox="0 0 30 16"><path d="M8 2h12v12h-12z" fill="#000"/></svg></div><div class="btn" style="left:847px;top:745px;width:30px;height:17px"><svg class="abs" style="left:0;top:0" width="30" height="16" viewBox="0 0 30 16"><path d="M14 2l7 7h-14zM7 11h14v3h-14z" fill="#000"/></svg></div><svg class="abs" style="left:924px;top:744px" width="15" height="20" viewBox="0 0 15 20"><path d="M5 1v5M9 1v5" stroke="#d8c020" stroke-width="1.800"/><path d="M3 6h9v5c0 2-2 3-4.500 3S3 13 3 11z" fill="#d0d0d0" stroke="#555" stroke-width=".9"/><path d="M7.500 14c0 3-1 4-4 4" fill="none" stroke="#444" stroke-width="1.200"/></svg><div class="abs" style="left:942px;top:746px;width:41px;height:16px;border:1px solid #111;border-radius:5px 4px 4px 5px;background:linear-gradient(#3cb83c,#7fe07f 35%,#a0f0a0 45%,#58cc58 75%,#2a9a2a)"></div><div class="abs" style="left:943px;top:747px;width:4px;height:14px;border-radius:4px 0 0 4px;background:linear-gradient(#c89878,#f0d8c0,#b08060)"></div><div class="abs" style="left:989px;top:747px;width:13px;height:10px;background:linear-gradient(135deg,#00e000,#00a800);border:1px solid #6a6a6a;border-right-color:#8a8a8a;border-bottom-color:#8a8a8a"></div><div class="abs" style="left:993px;top:757px;width:5px;height:2px;background:#777"></div><div class="abs" style="left:991px;top:759px;width:9px;height:1px;background:#888"></div><div class="t" style="left:1011px;top:748px;letter-spacing:0">3</div></div></body></html>
